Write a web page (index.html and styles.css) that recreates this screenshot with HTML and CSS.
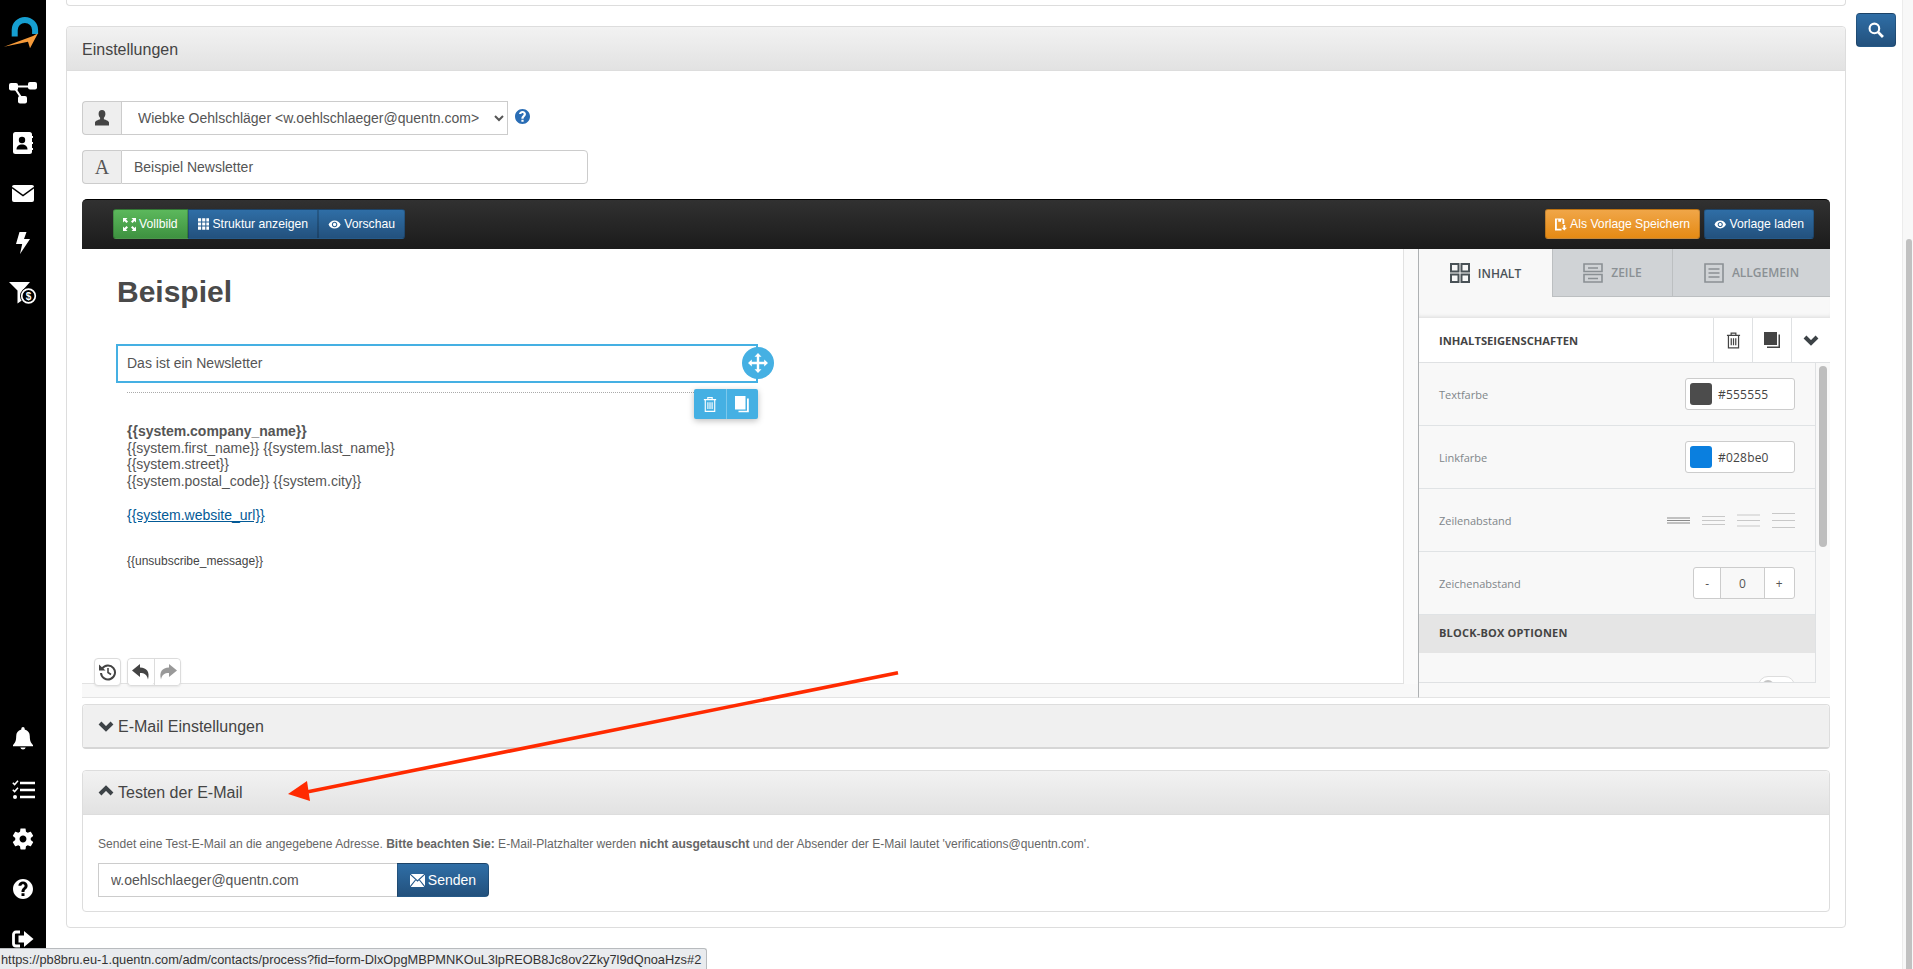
FILE: index.html
```html
<!DOCTYPE html>
<html lang="de">
<head>
<meta charset="utf-8">
<title>Einstellungen</title>
<link rel="stylesheet" href="styles.css">
</head>
<body>
<svg class="sprite" aria-hidden="true">
  <symbol id="eye" viewBox="0 0 24 24"><path d="M12 4.5C7 4.5 2.73 7.61 1 12c1.73 4.39 6 7.5 11 7.5s9.27-3.11 11-7.5c-1.73-4.39-6-7.5-11-7.5zM12 17c-2.76 0-5-2.24-5-5s2.24-5 5-5 5 2.24 5 5-2.24 5-5 5zm0-8c-1.66 0-3 1.34-3 3s1.34 3 3 3 3-1.34 3-3-1.34-3-3-3z"/></symbol>
  <symbol id="chev-down" viewBox="0 0 16 12"><path d="M2 3l6 6 6-6" fill="none" stroke="currentColor" stroke-width="4"/></symbol>
  <symbol id="chev-up" viewBox="0 0 16 12"><path d="M2 9l6-6 6 6" fill="none" stroke="currentColor" stroke-width="4"/></symbol>
  <symbol id="trash" viewBox="0 0 16 18"><path d="M1 3.5h14M5.5 3.5V1.2h5v2.3M2.6 3.5v13.3h10.8V3.5M5.6 6.5v7.6M8 6.5v7.6M10.4 6.5v7.6" fill="none" stroke="currentColor" stroke-width="1.3"/></symbol>
</svg>

<div class="app">
  <nav class="sidebar">
    <div class="nav-group">
      <a class="nav-item nav-logo">
        <svg width="46" height="50" viewBox="0 7 46 50"><path d="M14.7 36.5V30a10.2 10 0 0 1 20.400 0V34" fill="none" stroke="#169fd1" stroke-width="6"/><path d="M4 46.7L33 36l5-2.700-8 15-2-6.600z" fill="#f59a3a"/></svg>
      </a>
      <a class="nav-item">
        <svg class="ic-white" width="28" height="22" viewBox="0 0 28 22"><rect x="0" y="1" width="9" height="7.5" rx="2"/><rect x="19" y="0" width="9" height="7.5" rx="2"/><rect x="9" y="14" width="9" height="7.5" rx="2"/><path d="M7 3.5h13v2H7zM7 6l6 9 -1.8 1-6-9z"/></svg>
      </a>
      <a class="nav-item">
        <svg width="20" height="22" viewBox="0 0 20 22"><rect x="0" y="0" width="19" height="22" rx="2.5" fill="#fff"/><circle cx="9" cy="8" r="3.2" fill="#000"/><path d="M3.5 17.5c0-3.4 2.4-5 5.5-5s5.500 1.600 5.500 5z" fill="#000"/><path d="M19 5h1M19 11h1M19 17h1" stroke="#fff" stroke-width="2"/></svg>
      </a>
      <a class="nav-item">
        <svg width="22" height="17" viewBox="0 0 22 17"><rect width="22" height="17" rx="2" fill="#fff"/><path d="M0 2.500l11 8 11-8" fill="none" stroke="#000" stroke-width="1.500"/></svg>
      </a>
      <a class="nav-item">
        <svg class="ic-white" width="14" height="22" viewBox="0 0 14 22"><path d="M3.500 0h7L8 7h6L4 22l2.200-10H0z"/></svg>
      </a>
      <a class="nav-item">
        <svg width="28" height="22" viewBox="0 0 28 22"><path d="M0 0h21l-7.500 8.500V18l-5 3.500V8.500z" fill="#fff"/><circle cx="19.500" cy="14" r="8.500" fill="#000"/><circle cx="19.500" cy="14" r="6.800" fill="none" stroke="#fff" stroke-width="1.700"/><text x="19.500" y="17.500" class="dollar">$</text></svg>
      </a>
    </div>
    <div class="nav-group">
      <a class="nav-item">
        <svg class="ic-white" width="20" height="24" viewBox="0 0 20 24"><path d="M10 0a1.700 1.700 0 0 0-1.700 1.700v.9C4.900 3.400 3.200 6 3.200 9.300c0 4.600-1 6.500-3.200 8.700v1.200h20V18c-2.200-2.200-3.200-4.100-3.200-8.700 0-3.300-1.700-5.900-5.100-6.700v-.9A1.700 1.700 0 0 0 10 0zM7.300 20.500a2.800 2.800 0 0 0 5.400 0z"/></svg>
      </a>
      <a class="nav-item">
        <svg width="23" height="19" viewBox="0 0 23 19"><path d="M8 3h15M8 10h15M8 17h15" stroke="#fff" stroke-width="2.600"/><path d="M.8 2.800l1.800 1.800L6 .8M.8 9.800l1.800 1.800L6 7.800" fill="none" stroke="#fff" stroke-width="1.500"/><circle cx="3" cy="17" r="2" fill="#fff"/></svg>
      </a>
      <a class="nav-item">
        <svg class="ic-white" width="26" height="26" viewBox="0 0 24 24"><path d="M19.140 12.940c.04-.3.06-.61.06-.94 0-.32-.02-.64-.07-.94l2.030-1.580c.18-.14.23-.41.12-.61l-1.920-3.320c-.12-.22-.37-.29-.59-.22l-2.390.96c-.5-.38-1.030-.7-1.620-.94l-.36-2.540c-.04-.24-.24-.41-.48-.41h-3.840c-.24 0-.43.17-.47.41l-.36 2.540c-.59.24-1.130.57-1.620.94l-2.390-.96c-.22-.08-.47 0-.59.22L2.740 8.870c-.12.21-.08.47.12.61l2.030 1.580c-.05.3-.09.63-.09.94s.02.64.07.94l-2.030 1.580c-.18.14-.23.41-.12.61l1.920 3.320c.12.22.37.29.59.22l2.390-.96c.5.38 1.030.7 1.620.94l.36 2.540c.05.24.24.41.48.41h3.840c.24 0 .44-.17.47-.41l.36-2.540c.59-.24 1.130-.56 1.620-.94l2.390.96c.22.08.47 0 .59-.22l1.920-3.320c.12-.22.07-.47-.12-.61l-2.010-1.580zM12 15.200c-1.760 0-3.200-1.440-3.200-3.200s1.440-3.200 3.200-3.200 3.200 1.440 3.200 3.200-1.440 3.200-3.200 3.200z"/></svg>
      </a>
      <a class="nav-item">
        <svg class="ic-white" width="24" height="24" viewBox="0 0 24 24"><path d="M12 2C6.480 2 2 6.480 2 12s4.480 10 10 10 10-4.480 10-10S17.520 2 12 2zm1.500 17h-3v-2.800h3V19zm1.900-7.300l-.9.900c-.8.800-1 1.200-1 2.400h-3v-.6c0-1.300.5-2.400 1.300-3.200l1.300-1.300c.3-.3.500-.7.500-1.200 0-.9-.7-1.500-1.600-1.500s-1.600.7-1.600 1.600H7.400C7.400 6.300 9.400 4.500 12 4.500s4.600 1.800 4.600 4.200c0 1.200-.5 2.200-1.200 3z"/></svg>
      </a>
      <a class="nav-item">
        <svg width="22" height="18" viewBox="0 0 22 18"><path d="M8 2H4a2.500 2.500 0 0 0-2.500 2.500v9A2.500 2.500 0 0 0 4 16h4" fill="none" stroke="#fff" stroke-width="2.800"/><path d="M12 1l9.500 8-9.500 8v-4.500H6.500v-7H12z" fill="#fff"/></svg>
      </a>
    </div>
  </nav>

  <div class="workspace">
    <main class="main">
      <div class="stub-card"></div>
      <section class="card">
        <header class="card-head">Einstellungen</header>
        <div class="card-body">
          <div class="field-row">
            <div class="field field-select">
              <span class="addon">
                <svg class="ic-dark" width="14" height="16" viewBox="0 0 14 16"><path d="M7 0c2.200 0 3.400 1.700 3.400 3.800 0 1.600-.6 3-1.500 3.900v1.500c2 .7 5.100 1.500 5.100 3.400V15.500H0v-2.900c0-1.900 3.100-2.700 5.100-3.400V7.700c-.9-.9-1.500-2.300-1.500-3.900C3.600 1.700 4.800 0 7 0z"/></svg>
              </span>
              <select class="control">
                <option>Wiebke Oehlschläger &lt;w.oehlschlaeger@quentn.com&gt;</option>
              </select>
            </div>
            <svg class="help" width="15" height="15" viewBox="2 2 20 20"><path d="M12 2C6.480 2 2 6.480 2 12s4.480 10 10 10 10-4.480 10-10S17.520 2 12 2zm1.500 17h-3v-2.800h3V19zm1.900-7.300l-.9.900c-.8.800-1 1.200-1 2.400h-3v-.6c0-1.300.5-2.400 1.300-3.200l1.300-1.300c.3-.3.500-.7.500-1.200 0-.9-.7-1.500-1.600-1.500s-1.600.7-1.600 1.600H7.400C7.400 6.300 9.400 4.500 12 4.500s4.600 1.800 4.600 4.200c0 1.200-.5 2.200-1.200 3z"/></svg>
          </div>
          <div class="field field-subject">
            <span class="addon addon-serif">A</span>
            <input class="control" type="text" value="Beispiel Newsletter">
          </div>

          <div class="toolbar">
            <div class="btn-group">
              <button class="btn btn-green">
                <svg class="ic-white" width="13" height="13" viewBox="0 0 13 13"><path d="M0 0h4.500L3 1.500l2 2L3.500 5l-2-2L0 4.500zM13 0v4.500L11.500 3l-2 2L8 3.500l2-2L8.500 0zM0 13V8.500L1.500 10l2-2L5 9.500l-2 2L4.500 13zM13 13H8.500l1.500-1.500-2-2L9.500 8l2 2L13 8.500z"/></svg>
                Vollbild</button>
              <button class="btn btn-blue">
                <svg class="ic-white" width="12" height="12" viewBox="0 0 11 11"><path d="M0 0h3v3H0zM4 0h3v3H4zM8 0h3v3H8zM0 4h3v3H0zM4 4h3v3H4zM8 4h3v3H8zM0 8h3v3H0zM4 8h3v3H4zM8 8h3v3H8z"/></svg>
                Struktur anzeigen</button>
              <button class="btn btn-blue">
                <svg class="ic-white" width="15" height="15"><use href="#eye"/></svg>
                Vorschau</button>
            </div>
            <div class="btn-row">
              <button class="btn btn-orange">
                <svg class="ic-white" width="13" height="13" viewBox="0 0 13 13"><path d="M0 0h8.500L10 1.500V6H8V1H6.500v2.500h-3V1H2v10h5v2H0zM9 7h2v3h2l-3 3-3-3h2z"/></svg>
                Als Vorlage Speichern</button>
              <button class="btn btn-blue btn-solo">
                <svg class="ic-white" width="15" height="15"><use href="#eye"/></svg>
                Vorlage laden</button>
            </div>
          </div>

          <div class="editor">
            <div class="canvas-col">
              <div class="canvas">
                <h1 class="mail-title">Beispiel</h1>
                <div class="block-selected">
                  Das ist ein Newsletter
                  <span class="move-handle">
                    <svg class="ic-white" width="20" height="20" viewBox="0 0 20 20"><path d="M10 0l3.500 3.800H11.200v5h5V6.500L20 10l-3.800 3.500v-2.300h-5v5h2.300L10 20l-3.500-3.800h2.300v-5h-5v2.300L0 10l3.800-3.500v2.300h5v-5H6.500z"/></svg>
                  </span>
                  <span class="block-actions">
                    <span class="block-action"><svg width="14" height="17" class="stroke-white"><use href="#trash"/></svg></span>
                    <span class="block-action"><svg class="ic-white" width="16" height="17" viewBox="0 0 16 17"><path d="M1 0h10.500v13.500H1z"/><path d="M13 2.500h1.800V16.200H4.500v-1.400H13z"/></svg></span>
                  </span>
                </div>
                <div class="rule"></div>
                <address class="mail-address"><strong>{{system.company_name}}</strong><br>{{system.first_name}} {{system.last_name}}<br>{{system.street}}<br>{{system.postal_code}} {{system.city}}</address>
                <a class="mail-link">{{system.website_url}}</a>
                <p class="mail-unsub">{{unsubscribe_message}}</p>
                <div class="history">
                  <span class="hist-btn hist-solo">
                    <svg width="18" height="18" viewBox="0 0 18 18"><path d="M3.200 5.500A7 7 0 1 1 2 10" fill="none" stroke="#444" stroke-width="2"/><path d="M0 1.500L6.500 7.500H0z" fill="#444"/><path d="M9 5v4.500l3 2" fill="none" stroke="#444" stroke-width="1.600"/></svg>
                  </span>
                  <span class="hist-pair">
                    <span class="hist-btn"><svg width="18" height="16" viewBox="0 0 18 16"><path d="M8 0L0 6.500 8 13V9c4.500 0 7 1.500 8 6.500C18 8 15 3.800 8 3.600z" fill="#444"/></svg></span>
                    <span class="hist-btn"><svg width="18" height="16" viewBox="0 0 18 16"><path d="M10 0l8 6.500-8 6.500V9c-4.500 0-7 1.500-8 6.500C0 8 3 3.800 10 3.600z" fill="#999"/></svg></span>
                  </span>
                </div>
              </div>
              <div class="canvas-foot"></div>
            </div>

            <aside class="props">
              <div class="tabs">
                <div class="tab tab-active">
                  <svg width="20" height="20" viewBox="0 0 20 20" class="tab-icon"><path d="M1 1h7.500v7.500H1zM11.500 1H19v7.500h-7.500zM1 11.500h7.500V19H1zM11.500 11.500H19V19h-7.500z"/></svg>
                  INHALT</div>
                <div class="tab">
                  <svg width="20" height="20" viewBox="0 0 20 20" class="tab-icon"><path d="M1 1h18v7.500H1zM1 11.500h18V19H1zM5 5h10M5 15.500h10"/></svg>
                  ZEILE</div>
                <div class="tab">
                  <svg width="20" height="20" viewBox="0 0 20 20" class="tab-icon"><path d="M1 1h18v18H1zM4.500 6h11M4.500 10h11M4.500 14h11"/></svg>
                  ALLGEMEIN</div>
              </div>
              <div class="props-spacer"></div>
              <div class="props-head">
                <span class="props-title">INHALTSEIGENSCHAFTEN</span>
                <span class="props-tool"><svg width="15" height="17" class="stroke-dark"><use href="#trash"/></svg></span>
                <span class="props-tool"><svg class="ic-dark" width="16" height="16" viewBox="0 0 16 16"><path d="M0 0h13v13H0z"/><path d="M14.500 2.500H16V16H3v-1.500h11.500z"/></svg></span>
                <span class="props-tool"><svg class="chev-dark" width="16" height="12"><use href="#chev-down"/></svg></span>
              </div>
              <div class="props-scroll">
                <div class="props-list">
                  <div class="prop-row">
                    <span class="prop-label">Textfarbe</span>
                    <span class="color-input"><span class="swatch swatch-text"></span>#555555</span>
                  </div>
                  <div class="prop-row">
                    <span class="prop-label">Linkfarbe</span>
                    <span class="color-input"><span class="swatch swatch-link"></span>#028be0</span>
                  </div>
                  <div class="prop-row">
                    <span class="prop-label">Zeilenabstand</span>
                    <span class="lh-icons">
                      <svg width="23" height="15" viewBox="0 0 23 15" class="lh lh-on"><path d="M0 5h23M0 7.500h23M0 10h23"/></svg>
                      <svg width="23" height="15" viewBox="0 0 23 15" class="lh"><path d="M0 3.500h23M0 7.500h23M0 11.500h23"/></svg>
                      <svg width="23" height="15" viewBox="0 0 23 15" class="lh"><path d="M0 2h23M0 7.500h23M0 13h23"/></svg>
                      <svg width="23" height="15" viewBox="0 0 23 15" class="lh"><path d="M0 .5h23M0 7.500h23M0 14.500h23"/></svg>
                    </span>
                  </div>
                  <div class="prop-row">
                    <span class="prop-label">Zeichenabstand</span>
                    <span class="stepper"><span class="step">-</span><span class="step step-value">0</span><span class="step">+</span></span>
                  </div>
                  <div class="prop-section">BLOCK-BOX OPTIONEN</div>
                  <div class="prop-row prop-row-cut">
                    <span class="prop-label">Innenabstand</span>
                    <span class="prop-extra">Erweiterte Einstellungen<span class="toggle"><span class="knob"></span></span></span>
                  </div>
                </div>
                <div class="props-scrollbar"><div class="props-thumb"></div></div>
              </div>
            </aside>
          </div>

          <section class="sub-card sub-card-closed">
            <header class="sub-head sub-head-flat">
              <svg class="chev" width="16" height="12"><use href="#chev-down"/></svg>
              E-Mail Einstellungen
            </header>
          </section>

          <section class="sub-card sub-card-open">
            <header class="sub-head">
              <svg class="chev" width="16" height="12"><use href="#chev-up"/></svg>
              Testen der E-Mail
            </header>
            <div class="sub-body">
              <p class="test-note">Sendet eine Test-E-Mail an die angegebene Adresse. <strong>Bitte beachten Sie:</strong> E-Mail-Platzhalter werden <strong>nicht ausgetauscht</strong> und der Absender der E-Mail lautet 'verifications@quentn.com'.</p>
              <div class="test-form">
                <input class="test-input" type="text" value="w.oehlschlaeger@quentn.com">
                <button class="btn btn-blue btn-send">
                  <svg width="15" height="13" viewBox="0 0 15 13"><rect width="15" height="13" fill="#fff"/><path d="M0 0l7.500 7L15 0M0 13l5.500-7M15 13L9.500 6" fill="none" stroke="#24588a" stroke-width="1.100"/></svg>
                  Senden</button>
              </div>
            </div>
          </section>
        </div>
      </section>
    </main>

    <div class="side-tools">
      <button class="btn btn-blue btn-search">
        <svg width="16" height="16" viewBox="0 0 15 15"><circle cx="6" cy="6" r="4.500" fill="none" stroke="#fff" stroke-width="2"/><path d="M9.500 9.500L14 14" stroke="#fff" stroke-width="2.600"/></svg>
      </button>
    </div>

    <div class="page-scrollbar"><div class="page-thumb"></div></div>
  </div>
</div>

<svg class="annotation" width="630" height="145" viewBox="0 0 630 145">
  <path d="M618 12.700L28 131.700" stroke="#ff2a00" stroke-width="3.600" fill="none"/>
  <path d="M8 134L27 121l3 20z" fill="#ff2a00"/>
</svg>

<div class="status-bar">https://pb8bru.eu-1.quentn.com/adm/contacts/process?fid=form-DlxOpgMBPMNKOuL3lpREOB8Jc8ov2Zky7l9dQnoaHzs#2</div>
</body>
</html>
```
FILE: styles.css
```css
* { box-sizing: border-box; }
html, body { margin: 0; height: 969px; overflow: hidden; }
body {
  position: relative;
  background: #fff;
  color: #555;
  font-family: "Liberation Sans", Arial, sans-serif;
  font-size: 14px;
}
.sprite { position: absolute; width: 0; height: 0; }
.ic-white { fill: #fff; }
.ic-dark { fill: #444; }
.stroke-white { color: #fff; }
.stroke-dark { color: #444; }
.chev-dark { color: #3d4347; }

.app { display: flex; height: 969px; }

/* Sidebar */
.sidebar {
  width: 46px;
  flex: none;
  background: #000;
  display: flex;
  flex-direction: column;
  justify-content: space-between;
  padding: 7px 0 5px;
}
.nav-item { display: flex; height: 50px; align-items: center; justify-content: center; }
.nav-logo { margin-bottom: 11px; }
.dollar { font-family: "Liberation Sans", Arial, sans-serif; font-size: 10px; font-weight: 700; fill: #fff; text-anchor: middle; }

/* Workspace */
.workspace { flex: 1; display: flex; min-width: 0; }
.main { width: 1780px; margin-left: 20px; flex: none; }
.stub-card {
  height: 6px;
  border: 1px solid #ddd;
  border-top: 0;
  border-radius: 0 0 4px 4px;
  margin-bottom: 20px;
}
.card { border: 1px solid #ddd; border-radius: 4px; height: 902px; }
.card-head {
  height: 44px;
  padding: 2px 15px 0;
  line-height: 42px;
  font-size: 16px;
  color: #444;
  background: linear-gradient(#f2f2f2, #e2e2e2);
  border-bottom: 1px solid #ddd;
  border-radius: 4px 4px 0 0;
}
.card-body { padding: 30px 15px 0; }

.field-row { display: flex; align-items: flex-start; gap: 7px; margin-bottom: 15px; }
.field { display: flex; height: 34px; }
.field-select { width: 426px; }
.field-subject { width: 506px; margin-bottom: 15px; }
.addon {
  width: 39px;
  flex: none;
  display: flex;
  align-items: center;
  justify-content: center;
  background: #eee;
  border: 1px solid #ccc;
  border-right: 0;
  border-radius: 4px 0 0 4px;
}
.addon-serif { font-family: "Liberation Serif", "Times New Roman", serif; font-size: 20px; color: #555; }
.control {
  flex: 1;
  min-width: 0;
  height: 34px;
  padding: 0 12px;
  border: 1px solid #ccc;
  background: #fff;
  color: #555;
  font: 14px "Liberation Sans", Arial, sans-serif;
}
.field-subject .control { border-radius: 0 4px 4px 0; }
.help { fill: #2a6db5; margin-top: 8px; }

/* Toolbar */
.toolbar {
  height: 50px;
  padding: 9px 16px 0 31px;
  display: flex;
  justify-content: space-between;
  background: linear-gradient(#313131, #1b1b1b);
  border-top: 1px solid #000;
  border-radius: 5px 5px 0 0;
}
.btn-group, .btn-row { display: flex; }
.btn-row { gap: 4px; }
.btn {
  height: 30px;
  padding: 0 9px;
  border: 1px solid rgba(0, 0, 0, .18);
  color: #fff;
  font: 12.2px "Liberation Sans", Arial, sans-serif;
  display: inline-flex;
  align-items: center;
  gap: 3px;
  white-space: nowrap;
}
.btn-green { background: linear-gradient(#5cb85c, #3e9240); border-radius: 3px 0 0 3px; width: 75px; }
.btn-group .btn-blue { border-radius: 0; width: 130px; }
.btn-group .btn-blue:last-child { border-radius: 0 3px 3px 0; width: 87px; }
.btn-blue { background: linear-gradient(#2f6ea6, #23517d); }
.btn-orange { background: linear-gradient(#f0a648, #e58a14); border-radius: 3px; width: 155px; }
.btn-solo { border-radius: 3px; width: 110px; }

/* Editor */
.editor { display: flex; height: 449px; }
.canvas-col { width: 1336px; flex: none; background: #fafafa; }
.canvas {
  position: relative;
  width: 1322px;
  height: 435px;
  padding: 26px 0 0 34px;
  background: #fff;
  border-right: 1px solid #e2e2e2;
  border-bottom: 1px solid #e2e2e2;
}
.canvas-foot { height: 14px; background: #f8f8f8; border-bottom: 1px solid #e4e4e4; }
.mail-title { margin: 0 0 35px 1px; font-size: 30px; line-height: 34px; font-weight: 700; color: #4a4a4a; }
.block-selected {
  position: relative;
  width: 642px;
  height: 39px;
  padding-left: 9px;
  line-height: 35px;
  border: 2px solid #45b0e3;
  color: #555;
}
.move-handle {
  position: absolute;
  right: -18px;
  top: 1px;
  width: 32px;
  height: 32px;
  border-radius: 50%;
  background: #45b0e3;
  display: flex;
  align-items: center;
  justify-content: center;
}
.block-actions {
  position: absolute;
  right: -2px;
  top: 43px;
  display: flex;
  width: 64px;
  height: 30px;
  background: #45b0e3;
  border-radius: 2px;
  box-shadow: 0 2px 6px rgba(0, 0, 0, .25);
  z-index: 1;
}
.block-action {
  flex: 1;
  display: flex;
  align-items: center;
  justify-content: center;
}
.block-action + .block-action { border-left: 1px solid #7cc8ec; }
.rule { width: 631px; margin: 9px 0 0 11px; border-top: 1px dotted #aaa; }
.mail-address { margin: 30px 0 0 11px; font-style: normal; font-size: 14px; line-height: 16.6px; color: #555; }
.mail-link { display: inline-block; margin: 18px 0 0 11px; font-size: 14px; line-height: 17px; color: #035a96; text-decoration: underline; }
.mail-unsub { margin: 30px 0 0 11px; font-size: 12px; line-height: 14px; color: #444; }
.history { position: absolute; left: 12px; bottom: -3px; display: flex; gap: 6px; }
.hist-btn {
  display: flex;
  align-items: center;
  justify-content: center;
  width: 26px;
  height: 28px;
  background: #fff;
}
.hist-solo, .hist-pair {
  border: 1px solid #dcdcdc;
  border-radius: 4px;
  box-shadow: 0 1px 2px rgba(0, 0, 0, .08);
}
.hist-solo { width: 27px; height: 28px; }
.hist-pair { display: flex; height: 28px; }
.hist-pair .hist-btn { height: 26px; border-radius: 4px; }
.hist-pair .hist-btn + .hist-btn { border-left: 1px solid #dcdcdc; border-radius: 0 4px 4px 0; }

/* Properties panel */
.props {
  width: 412px;
  flex: none;
  border-left: 1px solid #aeb1b3;
  border-bottom: 1px solid #e4e4e4;
  background: #f8f8f8;
  font-family: "Open Sans", "Noto Sans", sans-serif;
  font-size: 11px;
  color: #555;
}
.tabs { display: grid; grid-template-columns: 134px 119px 158px; height: 48px; font-size: 12px; }
.tab {
  display: flex;
  align-items: center;
  justify-content: center;
  gap: 8px;
  font-weight: 600;
  color: #8a9094;
  background: #d0d3d6;
  border-bottom: 1px solid #bcbfc1;
  border-left: 1px solid #bcbfc1;
}
.tab-active { background: #f8f8f8; color: #4a5257; border: 0; border-right: 1px solid #bcbfc1; }
.tab-active + .tab { border-left: 0; }
.tab-icon { fill: none; stroke: #8a9094; stroke-width: 1.600; }
.tab-active .tab-icon { stroke: #4a5257; stroke-width: 2; }
.props-spacer { height: 21px; box-shadow: inset 0 -4px 4px -3px rgba(0, 0, 0, .12); }
.props-head {
  height: 45px;
  display: flex;
  background: #fff;
  border-bottom: 1px solid #dfe1e3;
}
.props-title { flex: 1; padding-left: 20px; line-height: 45px; font-size: 11.2px; font-weight: 700; color: #444; }
.props-tool {
  width: 39px;
  display: flex;
  align-items: center;
  justify-content: center;
  border-left: 1px solid #dfe1e3;
}
.props-scroll { display: flex; height: 320px; }
.props-list {
  width: 397px;
  height: 320px;
  overflow: hidden;
  border-right: 1px solid #dfe1e3;
  border-bottom: 1px solid #dfe1e3;
}
.prop-row {
  display: flex;
  align-items: center;
  justify-content: space-between;
  height: 63px;
  padding: 0 20px;
  border-bottom: 1px solid #e0e3e5;
}
.prop-row-cut { border-bottom: 0; padding-top: 2px; }
.prop-label { color: #80868a; font-size: 11px; }
.color-input {
  display: flex;
  align-items: center;
  gap: 6px;
  width: 110px;
  height: 32px;
  padding-left: 4px;
  background: #fff;
  border: 1px solid #ccc;
  border-radius: 3px;
  font-size: 12px;
  letter-spacing: .2px;
  color: #444;
}
.swatch { width: 22px; height: 22px; border-radius: 3px; }
.swatch-text { background: #4c4c4c; }
.swatch-link { background: #0a7fdf; }
.lh-icons { display: flex; gap: 12px; }
.lh { stroke: #c8c8c8; stroke-width: 1; }
.lh-on { stroke: #8a8a8a; }
.stepper {
  display: flex;
  width: 102px;
  height: 32px;
  background: #fff;
  border: 1px solid #ccc;
  border-radius: 3px;
  font-size: 12px;
  color: #555;
}
.step { width: 27px; display: flex; align-items: center; justify-content: center; }
.step:last-child { width: 30px; }
.step-value { width: 45px; background: #f8f8f8; border-left: 1px solid #ccc; border-right: 1px solid #ccc; }
.prop-section {
  height: 38px;
  padding-left: 20px;
  line-height: 36px;
  background: #e5e5e5;
  font-weight: 700;
  letter-spacing: .2px;
  color: #444;
}
.prop-extra { display: flex; align-items: center; gap: 13px; font-size: 11px; color: #80868a; }
.toggle {
  width: 37px;
  height: 20px;
  padding: 3px;
  background: #fff;
  border: 1px solid #ddd;
  border-radius: 10px;
}
.knob { display: block; width: 12px; height: 12px; border-radius: 50%; background: #c4c4c4; }
.props-scrollbar { flex: 1; padding: 3px 3px 0; }
.props-thumb { width: 8px; height: 181px; background: #bdbdbd; border-radius: 4px; }

/* Sub cards */
.sub-card { border: 1px solid #ddd; border-radius: 4px; }
.sub-card-closed { margin-top: 6px; height: 45px; border-bottom: 2px solid #d6d6d6; margin-bottom: 21px; }
.sub-card-open { height: 142px; }
.sub-head {
  height: 44px;
  display: flex;
  align-items: center;
  gap: 4px;
  padding-left: 15px;
  font-size: 16px;
  color: #444;
  background: linear-gradient(#f2f2f2, #e2e2e2);
  border-bottom: 1px solid #ddd;
  border-radius: 4px 4px 0 0;
}
.sub-head-flat { height: 42px; padding-top: 2px; background: #f0f0f0; border-bottom: 0; }
.chev { color: #3d4347; flex: none; margin-bottom: 3px; }
.sub-body { padding: 21px 15px 0; }
.test-note { margin: 0 0 10px; font-size: 12.07px; line-height: 17px; color: #666; }
.test-form { display: flex; }
.test-input {
  width: 299px;
  height: 34px;
  padding: 0 12px;
  border: 1px solid #ccc;
  border-right: 0;
  color: #555;
  font: 14px "Liberation Sans", Arial, sans-serif;
}
.btn-send { width: 92px; height: 34px; font-size: 14px; gap: 3px; justify-content: center; border-radius: 0 4px 4px 0; }

/* Right-hand tools */
.side-tools { margin-left: 10px; padding-top: 13px; }
.btn-search { width: 40px; height: 34px; padding: 0; justify-content: center; border-radius: 4px; }
.page-scrollbar {
  margin-left: auto;
  width: 11px;
  padding: 239px 1px 0 3px;
  background: #f8f8f8;
  border-left: 1px solid #ececec;
}
.page-thumb { height: 730px; background: #c1c1c1; border-radius: 4px 4px 0 0; }

/* Overlays */
.annotation { position: absolute; left: 280px; top: 660px; pointer-events: none; }
.status-bar {
  position: absolute;
  left: 0;
  bottom: 0;
  width: 707px;
  height: 21px;
  padding-left: 1px;
  line-height: 21px;
  font-size: 12.8px;
  color: #333;
  white-space: nowrap;
  background: #e9ebee;
  border: 1px solid #b8bbbe;
  border-left: 0;
  border-bottom: 0;
  border-radius: 0 3px 0 0;
}
```
